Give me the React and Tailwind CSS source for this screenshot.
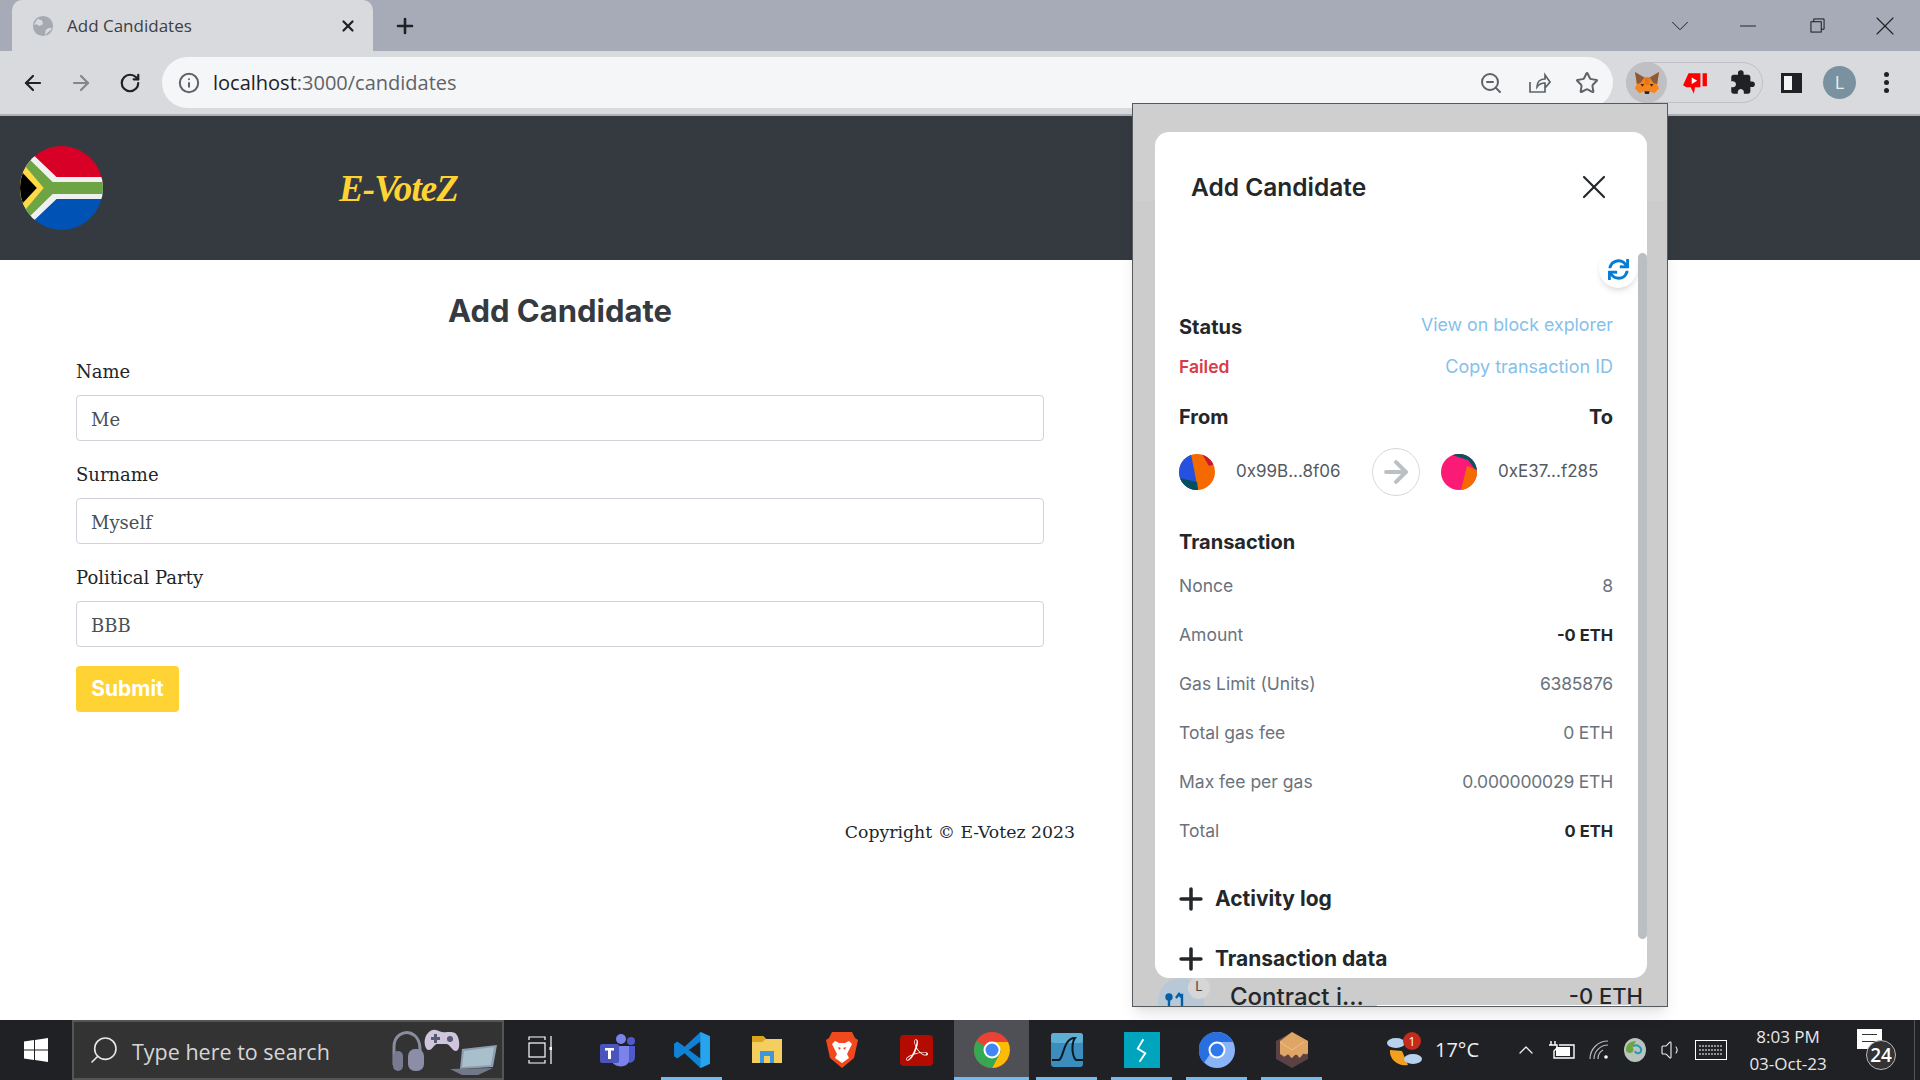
import React from "react";
import {
  ArrowLeft,
  ArrowRight,
  ChevronDown,
  ChevronUp,
  Info,
  Minus,
  Plus,
  RotateCw,
  Search,
  Star,
  Volume1,
  X,
  ZoomOut,
} from "lucide-react";
import { FaSync } from "react-icons/fa";
import { MdExtension } from "react-icons/md";
import { SiAdobeacrobatreader } from "react-icons/si";

const FlagLogo = () => (
  <svg viewBox="0 0 84 84" preserveAspectRatio="none" className="w-[83px] h-[84px]">
    <defs>
      <clipPath id="flagClip">
        <circle cx="42" cy="42" r="42" />
      </clipPath>
    </defs>
    <g clipPath="url(#flagClip)">
      <rect width="84" height="42" fill="#d80027" />
      <rect y="42" width="84" height="42" fill="#0052b4" />
      <polygon points="0,0 4,0 37,31 84,31 84,53 37,53 4,84 0,84" fill="#f0f0f0" />
      <polygon points="0,4 33,36 84,36 84,48 33,48 0,80" fill="#6da544" />
      <polygon points="0,14 24,42 0,70" fill="#ffda44" />
      <polygon points="0,24 17,42 0,60" fill="#000000" />
    </g>
  </svg>
);

const Fox = () => (
  <svg viewBox="0 0 28 26" className="w-[26px] h-[24px]">
    <polygon points="1,1 11,7 17,7 27,1 25,14 27,19 22,24 17,22 11,22 6,24 1,19 3,14" fill="#f6851b" />
    <polygon points="1,1 11,7 7,13 3,14" fill="#8a5a3a" />
    <polygon points="27,1 17,7 21,13 25,14" fill="#8a5a3a" />
    <polygon points="11,22 17,22 16,25 12,25" fill="#2b2320" />
    <polygon points="7,14 11,14 9,17" fill="#3a2a20" />
    <polygon points="21,14 17,14 19,17" fill="#3a2a20" />
    <polygon points="11,7 17,7 16,15 12,15" fill="#e2761b" />
  </svg>
);

const Blockie = ({ kind }) => (
  <svg viewBox="0 0 36 36" className="w-9 h-9 shrink-0">
    <defs>
      <clipPath id={`av${kind}`}>
        <circle cx="18" cy="18" r="18" />
      </clipPath>
    </defs>
    {kind === "from" ? (
      <g clipPath="url(#avfrom)">
        <rect width="36" height="36" fill="#f56a00" />
        <polygon points="0,0 12,0 19,36 0,36" fill="#2550e0" />
        <polygon points="0,24 18,28 19,36 0,36" fill="#034f5d" />
        <polygon points="23,0 36,0 36,10 30,12" fill="#c81638" />
      </g>
    ) : (
      <g clipPath="url(#avto)">
        <rect width="36" height="36" fill="#fb1a75" />
        <polygon points="8,0 36,0 36,18 27,6" fill="#03555e" />
        <polygon points="26,12 36,16 36,36 20,36" fill="#f56a00" />
      </g>
    )}
  </svg>
);

const TxRow = ({ label, value, strong }) => (
  <div className="h-[49px] flex items-center justify-between text-[17.5px] text-[#6a737d]">
    <span>{label}</span>
    <span className={strong ? "font-bold text-[16.5px] text-[#24272a]" : "text-[17.5px] tracking-[-0.2px]"}>{value}</span>
  </div>
);

const MetaMaskPopup = () => (
  <div className="absolute left-[1132px] top-[103px] w-[536px] h-[904px] bg-[#cfcfcf] border border-[#555a5e] shadow-lg overflow-hidden font-['Inter',sans-serif]">
    {/* bits of the page behind the modal */}
    <div className="absolute left-0 right-0 top-[97px] bottom-0 bg-[#cccccc]" />
    <div className="absolute left-[25px] top-[874px] w-[46px] h-[46px] rounded-full bg-[#b8c8d6]" />
    <div className="absolute left-[55px] top-[873px] w-[22px] h-[22px] rounded-full bg-[#d6d6d6] text-[13px] text-center text-[#444]">
      L
    </div>
    <svg viewBox="0 0 24 24" className="absolute left-[31px] top-[886px] w-6 h-6" fill="none" stroke="#0360a8" strokeWidth="2.4">
      <circle cx="5" cy="7" r="2.5" fill="#0360a8" />
      <path d="M5 8v14M12 8l3-4 3 4M15 5h3v17" />
    </svg>
    <div className="absolute left-[97px] top-[875px] text-[24px] font-medium text-[#24272a]">Contract i...</div>
    <div className="absolute right-[24px] top-[876px] text-[22px] font-medium text-[#24272a]">-0 ETH</div>
    <div className="absolute left-[244px] right-[36px] bottom-0 h-px bg-white" />

    {/* modal */}
    <div className="absolute left-[22px] top-[28px] w-[492px] h-[846px] bg-white rounded-[14px] overflow-hidden text-[#24272a]">
      <div className="flex items-center justify-between pl-[36px] pr-[33px] pt-[35px]">
        <span className="text-[24.5px] leading-[30px] font-semibold">Add Candidate</span>
        <X className="w-[40px] h-[40px]" strokeWidth={1.3} />
      </div>
      <div className="flex justify-end pr-[10px] mt-[43px]">
        <div className="w-[38px] h-[38px] rounded-full bg-white shadow-md flex items-center justify-center">
          <FaSync className="w-[21px] h-[21px] text-[#037dd6]" />
        </div>
      </div>
      <div className="pl-[24px] pr-[34px] mt-[25px]">
        <div className="flex items-center justify-between h-[28px]">
          <span className="text-[20px] font-bold">Status</span>
          <span className="text-[17.8px] -mt-[4px] text-[#85bfeb]">View on block explorer</span>
        </div>
        <div className="flex items-center justify-between h-[28px] mt-[12px]">
          <span className="text-[17.5px] font-semibold text-[#d73a49]">Failed</span>
          <span className="text-[18px] -mt-[2px] text-[#85bfeb]">Copy transaction ID</span>
        </div>
        <div className="flex items-center justify-between h-[28px] mt-[22px] text-[20px] font-bold">
          <span>From</span>
          <span>To</span>
        </div>
        <div className="flex items-center mt-[17px] h-[48px] text-[17px] text-[#535a61]">
          <Blockie kind="from" />
          <span className="ml-[21px] w-[136px]">0x99B...8f06</span>
          <div className="w-[48px] h-[48px] rounded-full border border-[#d6d9dc] flex items-center justify-center shrink-0">
            <ArrowRight className="w-[34px] h-[34px] text-[#bbc0c5]" strokeWidth={2.8} />
          </div>
          <div className="ml-[21px]">
            <Blockie kind="to" />
          </div>
          <span className="ml-[21px]">0xE37...f285</span>
        </div>
        <div className="text-[20px] font-bold mt-[32px] h-[28px] flex items-center">Transaction</div>
        <div className="mt-[6px]">
          <TxRow label="Nonce" value="8" />
          <TxRow label="Amount" value="-0 ETH" strong />
          <TxRow label="Gas Limit (Units)" value="6385876" />
          <TxRow label="Total gas fee" value="0 ETH" />
          <TxRow label="Max fee per gas" value="0.000000029 ETH" />
          <TxRow label="Total" value="0 ETH" strong />
        </div>
        <div className="flex items-center h-[28px] mt-[29px] text-[21px] font-bold">
          <Plus className="w-[34px] h-[34px] -ml-[5px] shrink-0" strokeWidth={2.5} />
          <span className="ml-[7px]">Activity log</span>
        </div>
        <div className="flex items-center h-[28px] mt-[32px] text-[21px] font-bold">
          <Plus className="w-[34px] h-[34px] -ml-[5px] shrink-0" strokeWidth={2.5} />
          <span className="ml-[7px]">Transaction data</span>
        </div>
      </div>
      <div className="absolute right-0 top-[121px] w-[9px] h-[686px] rounded-full bg-[#b9bfc3]" />
    </div>
  </div>
);

const BrowserChrome = () => (
  <div className="shrink-0 font-['Open_Sans',sans-serif]">
    <div className="h-[51px] bg-[#a7abb7] flex items-end pl-[12px]">
      <div className="w-[361px] h-[51px] bg-[#d9dade] rounded-t-[10px] flex items-center pl-[20px] pr-[16px]">
        <svg viewBox="0 0 24 24" className="w-[22px] h-[22px]">
          <circle cx="12" cy="12" r="11" fill="#a5a9b0" />
          <path d="M6 4l5 2 1 4-4 2-3-2-3 1M14 22l1-6 4-2 3 1" fill="#d9dade" />
        </svg>
        <span className="ml-[13px] text-[17px] text-[#3c4043]">Add Candidates</span>
        <X className="ml-auto w-[18px] h-[18px] text-[#202124]" strokeWidth={3} />
      </div>
      <div className="h-[51px] flex items-center ml-[20px]">
        <Plus className="w-[24px] h-[24px] text-[#202124]" strokeWidth={2.6} />
      </div>
      <div className="ml-auto h-[51px] flex items-center text-[#202124]">
        <ChevronDown className="w-[30px] h-[30px] mr-[40px]" strokeWidth={0.8} />
        <Minus className="w-[26px] h-[26px] mr-[49px]" strokeWidth={0.9} />
        <svg viewBox="0 0 16 16" className="w-[15px] h-[15px] mr-[44px]" fill="none" stroke="#111" strokeWidth="1">
          <rect x="1" y="4" width="11" height="11" />
          <path d="M4 4V1h11v11h-3" />
        </svg>
        <X className="w-[32px] h-[32px] mr-[19px]" strokeWidth={0.8} />
      </div>
    </div>
    <div className="h-[65px] bg-[#d9dade] border-b-2 border-[#b0b1b6] flex items-center">
      <ArrowLeft className="ml-[21px] w-[24px] h-[24px] text-[#202124]" strokeWidth={2.2} />
      <ArrowRight className="ml-[24px] w-[24px] h-[24px] text-[#84868a]" strokeWidth={2.2} />
      <RotateCw className="ml-[26px] w-[22px] h-[22px] text-[#202124]" strokeWidth={2.4} />
      <div className="ml-[21px] w-[1451px] h-[51px] rounded-full bg-[#f5f6f8] flex items-center pl-[16px] pr-[14px]">
        <Info className="w-[22px] h-[22px] text-[#5f6368]" strokeWidth={2.2} />
        <span className="ml-[13px] text-[20px] text-[#202124]">
          localhost<span className="text-[#5f6368]">:3000/candidates</span>
        </span>
        <div className="ml-auto flex items-center gap-[24px] text-[#5f6368]">
          <ZoomOut className="w-[24px] h-[24px]" />
          <svg viewBox="0 0 24 24" className="w-[24px] h-[24px]" fill="none" stroke="#5f6368" strokeWidth="1.7">
            <path d="M3 11v10h15v-4M10 16c0-5 3-8 8-8V4l5 7-5 6v-5c-4 0-6 1-8 4z" />
          </svg>
          <Star className="w-[24px] h-[24px]" strokeWidth={2} />
        </div>
      </div>
      <div className="ml-[13px] relative w-[137px] h-[41px] rounded-full border border-[#bfc0c5] flex items-center">
        <div className="w-[41px] h-[41px] -ml-px rounded-full bg-[#c0c0c4] flex items-center justify-center">
          <Fox />
        </div>
        <svg viewBox="0 0 24 24" className="ml-[15px] w-[26px] h-[26px]">
          <path d="M6 3h11v13h-5l-1 6-3-6H4L1 14z" fill="#ff0000" />
          <path d="M9 7l5 3-5 3z" fill="#fff" />
          <rect x="19" y="3" width="4" height="12" fill="#ff0000" />
        </svg>
        <MdExtension className="ml-[21px] w-[27px] h-[27px] text-[#202124]" />
      </div>
      <div className="ml-[18px] w-[21px] h-[20px] border-[3px] border-[#202124] border-r-[10px] bg-[#f4f4f4]" />
      <div className="ml-[21px] w-[33px] h-[33px] rounded-full bg-[#7a929f] text-[#e8edf0] text-[18px] leading-[33px] text-center">
        L
      </div>
      <div className="ml-[28px] flex flex-col gap-[3px]">
        <span className="w-[5px] h-[5px] rounded-full bg-[#202124]" />
        <span className="w-[5px] h-[5px] rounded-full bg-[#202124]" />
        <span className="w-[5px] h-[5px] rounded-full bg-[#202124]" />
      </div>
    </div>
  </div>
);

const Field = ({ label, value }) => (
  <div className="mb-[22px]">
    <label className="block text-[18px] leading-[24px] mb-[11px] text-[#212529] font-['DejaVu_Serif',serif]">
      {label}
    </label>
    <div className="h-[46px] border border-[#ced4da] rounded-[4px] bg-white pl-[14px] pt-[3px] flex items-center text-[18px] text-[#495057] font-['DejaVu_Serif',serif]">
      {value}
    </div>
  </div>
);

const Task = ({ active, line = true, children }) => (
  <div className={`relative h-[60px] w-[75px] flex items-center justify-center ${active ? "bg-[#4f5055]" : ""}`}>
    {children}
    {line && <div className={`absolute bottom-0 h-[3px] bg-[#76b9ed] ${active ? "left-0 right-0" : "left-[7px] right-[7px]"}`} />}
  </div>
);

const Taskbar = () => (
  <div className="shrink-0 h-[60px] bg-[#1f2125] flex items-center text-white font-['Open_Sans',sans-serif]">
    <div className="w-[72px] flex justify-center">
      <svg viewBox="0 0 24 24" className="w-[24px] h-[24px]" fill="#fff">
        <path d="M0 3.5l10-1.4v9.4H0zM11 2l13-2v11.5H11zM0 12.5h10v9.4L0 20.5zM11 12.5h13V24l-13-2z" />
      </svg>
    </div>
    <div className="relative w-[432px] h-[60px] bg-[#333333] border-2 border-[#555555] flex items-center">
      <Search className="ml-[14px] w-[32px] h-[32px] -scale-x-100 text-[#e8e8e8]" strokeWidth={1.2} />
      <span className="ml-[12px] mt-[4px] text-[21.5px] text-[#d6d6d6]">Type here to search</span>
      <svg viewBox="0 0 110 50" className="absolute right-[2px] top-[2px] w-[110px] h-[52px]">
        <path d="M4 40V22C4 10 14 6 20 8c6 2 10 8 10 16v14" fill="none" stroke="#8a8da0" strokeWidth="3" />
        <rect x="3" y="26" width="10" height="20" rx="5" fill="#777a90" />
        <rect x="18" y="24" width="16" height="22" rx="7" fill="#8b8ea6" />
        <path d="M38 8c5-6 10-2 14-1 5 1 8-1 13 1 5 3 6 18 1 18-4 0-6-7-10-7H47c-3 0-5 7-9 6-4-2-5-12 0-17z" fill="#cfc6de" />
        <circle cx="60" cy="14" r="3" fill="#555a70" />
        <rect x="44" y="9" width="3" height="9" fill="#555a70" />
        <rect x="41" y="12" width="9" height="3" fill="#555a70" />
        <polygon points="72,24 107,20 103,42 70,44" fill="#8f9db0" />
        <polygon points="74,26 104,22 101,40 72,42" fill="#a7c0cc" />
        <polygon points="60,44 103,43 88,50 72,50" fill="#717888" />
      </svg>
    </div>
    <div className="ml-[24px] w-[24px]">
      <svg viewBox="0 0 24 30" className="w-[24px] h-[30px]" fill="none" stroke="#fff" strokeWidth="1.2">
        <path d="M1 5V2h16v3M1 25v3h16v-3" />
        <rect x="1" y="8" width="16" height="14" />
        <path d="M23 1v28" />
        <rect x="21.5" y="12" width="3" height="3" fill="#fff" stroke="none" />
      </svg>
    </div>
    <div className="ml-[48px] w-[36px] flex justify-center">
      <svg viewBox="0 0 36 34" className="w-[36px] h-[34px]">
        <circle cx="21" cy="6" r="5" fill="#7b83eb" />
        <circle cx="31" cy="8" r="4" fill="#5059c9" />
        <path d="M25 13h10v11c0 5-5 7-8 5z" fill="#5059c9" />
        <path d="M11 13h18v14c0 8-15 9-18 0z" fill="#7b83eb" />
        <rect x="0" y="11" width="19" height="19" rx="2" fill="#4b53bc" />
        <path d="M5 15h9v2.5h-3V26H8v-8.5H5z" fill="#fff" />
      </svg>
    </div>
    <div className="ml-[18px] flex">
      <Task>
        <svg viewBox="0 0 36 36" className="w-[38px] h-[38px]">
          <path d="M26 1l9 4v26l-9 4-15-14-7 5-3-2V12l3-2 7 5z" fill="#0f82d6" />
          <path d="M26 10L15 18l11 8z" fill="#1f2125" />
          <path d="M26 1l9 4v26l-9 4z" fill="#26a5ee" />
        </svg>
      </Task>
      <Task line={false}>
        <svg viewBox="0 0 32 34" className="w-[32px] h-[34px]">
          <path d="M1 3h11l3 3h16v24H1z" fill="#f4cf5f" />
          <path d="M1 3h11l3 3-4 3H1z" fill="#dca31c" />
          <path d="M9 30V18h14v12h-4v-7h-6v7z" fill="#3f97db" />
        </svg>
      </Task>
      <Task line={false}>
        <svg viewBox="0 0 32 38" className="w-[32px] h-[38px]">
          <path d="M6 1h20l3 6 3 2-4 18-12 10L4 27 0 9l3-2z" fill="#f1491d" />
          <path d="M9 10l4 2h6l4-2 3 3-5 10 2 4-7 5-7-5 2-4-5-10z" fill="#fff" />
          <path d="M12 16l3 1-2 2zM20 16l-3 1 2 2z" fill="#f1491d" />
        </svg>
      </Task>
      <Task line={false}>
        <div className="w-[33px] h-[31px] rounded-[4px] bg-[#b30b00] flex items-center justify-center">
          <SiAdobeacrobatreader className="w-[22px] h-[22px] text-white" />
        </div>
      </Task>
      <Task active>
        <svg viewBox="0 0 36 36" className="w-[36px] h-[36px]">
          <circle cx="18" cy="18" r="18" fill="#ea4335" />
          <path d="M18 18L2.4 9A18 18 0 0 0 9 33.6z" fill="#34a853" />
          <path d="M18 10h16a18 18 0 0 1-16 26l9-17z" fill="#fbbc05" />
          <path d="M18 18l-9 15.6A18 18 0 0 0 18 36l9-17z" fill="#34a853" />
          <circle cx="18" cy="18" r="8.5" fill="#fff" />
          <circle cx="18" cy="18" r="6.5" fill="#4285f4" />
        </svg>
      </Task>
      <Task>
        <svg viewBox="0 0 34 36" className="w-[34px] h-[36px]">
          <rect x="1" y="1" width="32" height="34" rx="3" fill="#3a8dbc" />
          <rect x="1" y="1" width="32" height="10" rx="3" fill="#5faed4" />
          <path d="M2 28h7c5-2 4-22 16-22-4 6-3 18 1 22h7" fill="none" stroke="#0a1a24" strokeWidth="2" />
        </svg>
      </Task>
      <Task>
        <div className="w-[36px] h-[36px] bg-[#00a4bd] flex items-center justify-center">
          <svg viewBox="0 0 16 26" className="w-[15px] h-[25px]" fill="none" stroke="#fff" strokeWidth="2">
            <path d="M10 1L4 11l8 5-6 9" />
          </svg>
        </div>
      </Task>
      <Task>
        <svg viewBox="0 0 36 36" className="w-[36px] h-[36px]">
          <circle cx="18" cy="18" r="18" fill="#8ab4f8" />
          <path d="M18 0a18 18 0 0 1 16 10H18a8 8 0 0 0-7 12L5 31A18 18 0 0 1 18 0z" fill="#2a6fe0" />
          <circle cx="18" cy="18" r="8.5" fill="#fff" />
          <circle cx="18" cy="18" r="6.5" fill="#3079ed" />
        </svg>
      </Task>
      <Task>
        <svg viewBox="0 0 32 36" className="w-[32px] h-[36px]">
          <polygon points="16,0 32,9 32,27 16,36 0,27 0,9" fill="#5b4144" />
          <path d="M16 0l16 9v12c-2 3-3 0-5 1-2 2-3 6-5 2-2-3-4 0-6 2-2 0-3-5-5-3-2 1-3 3-5 0-1-1-2 0-2-2V9z" fill="#dfa565" />
          <path d="M4 10l12 8 12-8" fill="none" stroke="#ecc08e" strokeWidth="1" />
        </svg>
      </Task>
    </div>
    {/* tray */}
    <div className="ml-auto flex items-center h-[60px]">
      <svg viewBox="0 0 36 36" className="w-[36px] h-[36px]">
        <path d="M4 18c-1 9 8 17 18 15l-6-14z" fill="#f2a01e" />
        <ellipse cx="10" cy="11" rx="9" ry="5" fill="#b7d2ec" />
        <ellipse cx="27" cy="27" rx="9" ry="5" fill="#b7d2ec" />
        <circle cx="26" cy="9" r="9" fill="#c42b1c" />
        <text x="26" y="13.5" textAnchor="middle" fontSize="12" fill="#fff">1</text>
      </svg>
      <span className="ml-[13px] text-[20px] text-[#eeeeee]">17°C</span>
      <ChevronUp className="ml-[35px] w-[24px] h-[24px] text-[#f0f0f0]" strokeWidth={1.3} />
      <svg viewBox="0 0 26 18" className="ml-[11px] w-[26px] h-[18px]" fill="none" stroke="#fff" strokeWidth="1.4">
        <path d="M2 0v4M6 0v4M0 4h8v3l-3 3v7h20V4H10" />
        <rect x="7" y="6" width="14" height="9" fill="#fff" stroke="none" />
      </svg>
      <svg viewBox="0 0 20 20" className="ml-[14px] w-[20px] h-[20px]" fill="none" stroke="#b9b9b9" strokeWidth="1.2">
        <path d="M1 19A18 18 0 0 1 19 1M5 19A14 14 0 0 1 19 5M9 19A10 10 0 0 1 14 10" />
        <circle cx="17" cy="17" r="1.8" fill="#fff" stroke="none" />
      </svg>
      <svg viewBox="0 0 22 24" className="ml-[15px] w-[22px] h-[24px]">
        <ellipse cx="11" cy="12" rx="11" ry="12" fill="#b8c4bc" />
        <path d="M2 12c0-6 5-9 10-9-1 3-4 4-3 7 1 2 0 5-3 5-2 0-4-1-4-3z" fill="#6da544" />
        <path d="M9 8c4-2 9 1 8 5-1 3-5 3-6 0" fill="none" stroke="#1f9ab8" strokeWidth="2" />
      </svg>
      <Volume1 className="ml-[14px] w-[24px] h-[24px] text-[#f0f0f0]" strokeWidth={1.1} />
      <svg viewBox="0 0 32 20" className="ml-[11px] w-[32px] h-[20px]" fill="none" stroke="#fff" strokeWidth="1">
        <rect x="0.5" y="0.5" width="31" height="19" />
        <path d="M4 6h24M4 10h24M4 14h24" strokeDasharray="2 1" />
      </svg>
      <div className="ml-[19px] w-[84px] flex flex-col items-center text-[#e8e8e8] text-[17px] leading-[27px]">
        <span>8:03 PM</span>
        <span>03-Oct-23</span>
      </div>
      <div className="relative ml-[27px] mr-[32px] w-[25px] h-[20px] -mt-[22px] bg-white">
        <div className="absolute left-[5px] right-[5px] top-[5px] h-[8px] border-y border-[#333]" />
        <div className="absolute left-[9px] top-[11px] w-[30px] h-[30px] rounded-full border border-[#bbb] bg-[#333] text-white text-[19px] leading-[28px] text-center font-semibold">
          24
        </div>
      </div>
      <div className="w-px h-[60px] bg-[#555]" />
      <div className="w-[5px]" />
    </div>
  </div>
);

const App = () => {
  return (
    <div className="relative w-[1920px] h-[1080px] overflow-hidden flex flex-col bg-white">
      <BrowserChrome />
      <header className="shrink-0 h-[144px] bg-[#343a40] flex items-center pl-[20px]">
        <FlagLogo />
        <span className="ml-[236px] mt-[2px] text-[37px] font-bold italic tracking-tight text-[#ffd333] font-['Liberation_Serif',serif]">
          E-VoteZ
        </span>
      </header>
      <main className="flex-1 w-[1120px] pl-[76px] pr-[76px]">
        <h1 className="text-center text-[31px] leading-[40px] mt-[31px] mb-[29px] font-bold text-[#343a40] font-['Inter',sans-serif]">
          Add Candidate
        </h1>
        <Field label="Name" value="Me" />
        <Field label="Surname" value="Myself" />
        <div className="-mb-[3px]">
          <Field label="Political Party" value="BBB" />
        </div>
        <button className="w-[103px] h-[46px] rounded-[4px] bg-[#ffd333] text-white text-[21px] font-bold font-['Inter',sans-serif]">
          Submit
        </button>
        <p className="mt-[108px] -mr-[31px] text-right text-[17.3px] leading-[24px] text-[#212529] font-['DejaVu_Serif',serif]">
          Copyright © E-Votez 2023
        </p>
      </main>
      <Taskbar />
      <MetaMaskPopup />
    </div>
  );
};

export default App;
